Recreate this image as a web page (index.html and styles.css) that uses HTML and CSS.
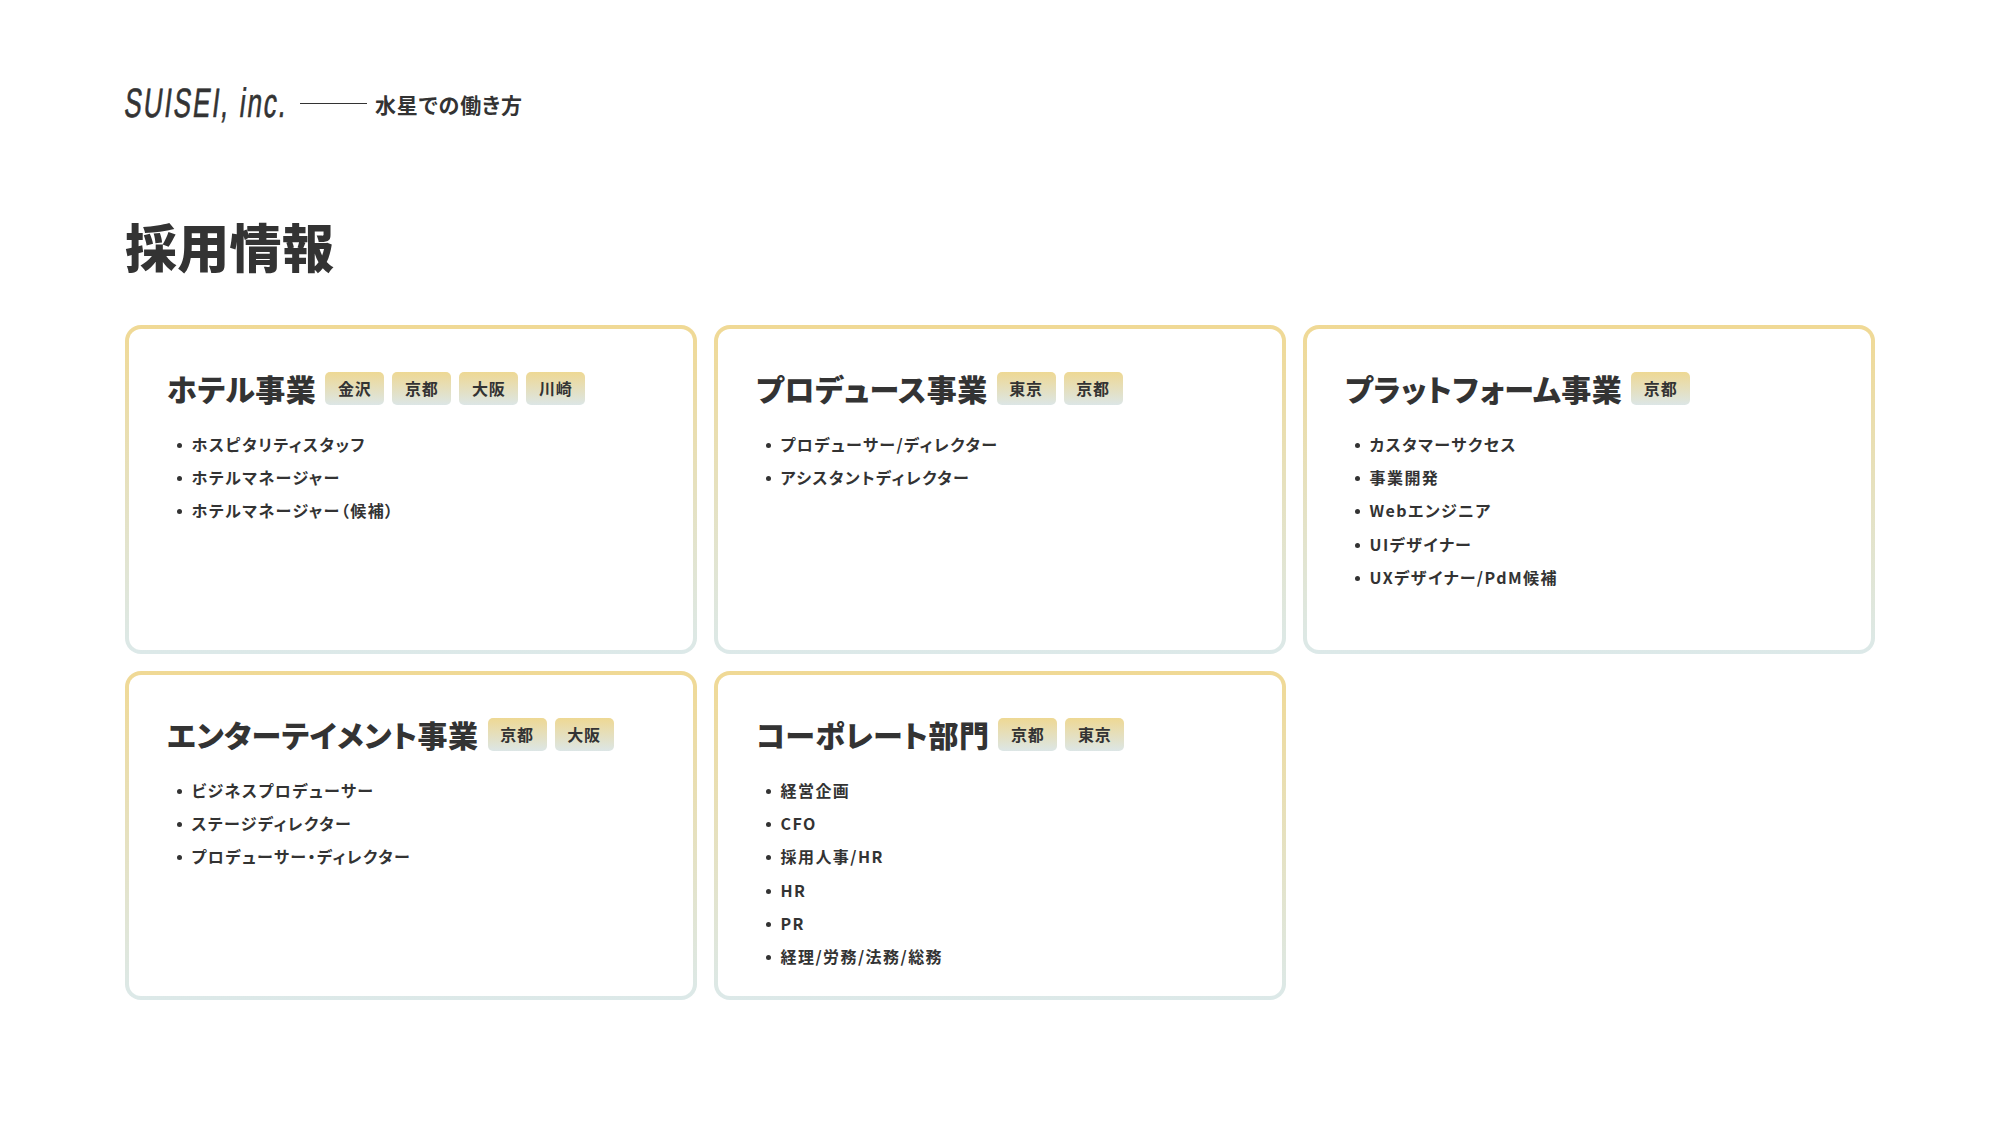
FILE: index.html
```html
<!DOCTYPE html>
<html lang="ja">
<head>
<meta charset="utf-8">
<title>採用情報</title>
<link rel="stylesheet" href="styles.css">
</head>
<body>
<main class="page">
  <header class="header">
    <span class="logo"><span class="logo-text">SUISEI, inc.</span></span>
    <span class="rule"></span>
    <span class="deck">水星での働き方</span>
  </header>
  <h1 class="title">採用情報</h1>
  <div class="grid">
    <section class="card">
      <div class="card-head"><h2 class="card-title">ホテル事業</h2><div class="tags"><span class="tag">金沢</span><span class="tag">京都</span><span class="tag">大阪</span><span class="tag">川崎</span></div></div>
      <ul class="jobs"><li>ホスピタリティスタッフ</li><li>ホテルマネージャー</li><li>ホテルマネージャー（候補）</li></ul>
    </section>
    <section class="card">
      <div class="card-head"><h2 class="card-title">プロデュース事業</h2><div class="tags"><span class="tag">東京</span><span class="tag">京都</span></div></div>
      <ul class="jobs"><li>プロデューサー/ディレクター</li><li>アシスタントディレクター</li></ul>
    </section>
    <section class="card">
      <div class="card-head"><h2 class="card-title">プラットフォーム事業</h2><div class="tags"><span class="tag">京都</span></div></div>
      <ul class="jobs"><li>カスタマーサクセス</li><li>事業開発</li><li>Webエンジニア</li><li>UIデザイナー</li><li>UXデザイナー/PdM候補</li></ul>
    </section>
    <section class="card">
      <div class="card-head"><h2 class="card-title">エンターテイメント事業</h2><div class="tags"><span class="tag">京都</span><span class="tag">大阪</span></div></div>
      <ul class="jobs"><li>ビジネスプロデューサー</li><li>ステージディレクター</li><li>プロデューサー・ディレクター</li></ul>
    </section>
    <section class="card">
      <div class="card-head"><h2 class="card-title">コーポレート部門</h2><div class="tags"><span class="tag">京都</span><span class="tag">東京</span></div></div>
      <ul class="jobs"><li>経営企画</li><li>CFO</li><li>採用人事/HR</li><li>HR</li><li>PR</li><li>経理/労務/法務/総務</li></ul>
    </section>
  </div>
</main>
</body>
</html>
```
FILE: styles.css
```css
* { box-sizing: border-box; }
html, body { margin: 0; padding: 0; background: #fff; }
body {
  width: 2000px;
  height: 1125px;
  overflow: hidden;
  color: #333;
  font-family: "Noto Sans CJK JP", "Noto Sans", sans-serif;
  font-feature-settings: "palt";
}
.page { padding: 84px 125px 0; }
.header { display: flex; align-items: center; height: 38px; }
.logo { display: block; width: 160px; height: 38px; }
.logo-text {
  display: block;
  font-family: "Liberation Sans", sans-serif;
  font-size: 41px;
  line-height: 38px;
  font-weight: 400;
  letter-spacing: 3.2px;
  white-space: nowrap;
  transform-origin: 0 50%;
  transform: skewX(-7deg) scaleX(.63);
  -webkit-text-stroke: .7px #333;
}
.rule { width: 67px; height: 1px; background: #333; margin-left: 15px; margin-top: 1px; }
.deck { font-size: 21px; font-weight: 700; margin-left: 8px; letter-spacing: .85px; margin-top: 2px; line-height: 1; }
.title { margin: 89px 0 0; font-size: 52px; line-height: 70px; font-weight: 900; letter-spacing: .3px; }
.grid { display: grid; grid-template-columns: repeat(3, 1fr); grid-auto-rows: 329px; gap: 17px; margin-top: 44px; }
.card {
  border: 4px solid transparent;
  border-radius: 16px;
  padding: 43px 38px 0;
  background: linear-gradient(#fff, #fff) padding-box, linear-gradient(#f0d995, #dce9e9) border-box;
}
.card-head { display: flex; align-items: center; gap: 9px; height: 33px; }
.card-title { margin: 0; font-size: 30px; line-height: 33px; font-weight: 900; letter-spacing: .45px; white-space: nowrap; }
.tags { display: flex; gap: 8px; }
.tag {
  display: block;
  height: 33px;
  padding: 0 12.7px;
  border-radius: 5px;
  background: linear-gradient(#eed893, #dce6e6);
  font-size: 16px;
  line-height: 33px;
  font-weight: 700;
  letter-spacing: .8px;
  white-space: nowrap;
}
.jobs { list-style: none; margin: 23px 0 0; padding: 0 0 0 24.5px; }
.jobs li {
  position: relative;
  font-size: 16px;
  line-height: 33.2px;
  font-weight: 700;
  letter-spacing: 1.45px;
  white-space: nowrap;
}
.jobs li::before {
  content: "";
  position: absolute;
  left: -15px;
  top: 15px;
  width: 5px;
  height: 5px;
  border-radius: 50%;
  background: #333;
}
```
